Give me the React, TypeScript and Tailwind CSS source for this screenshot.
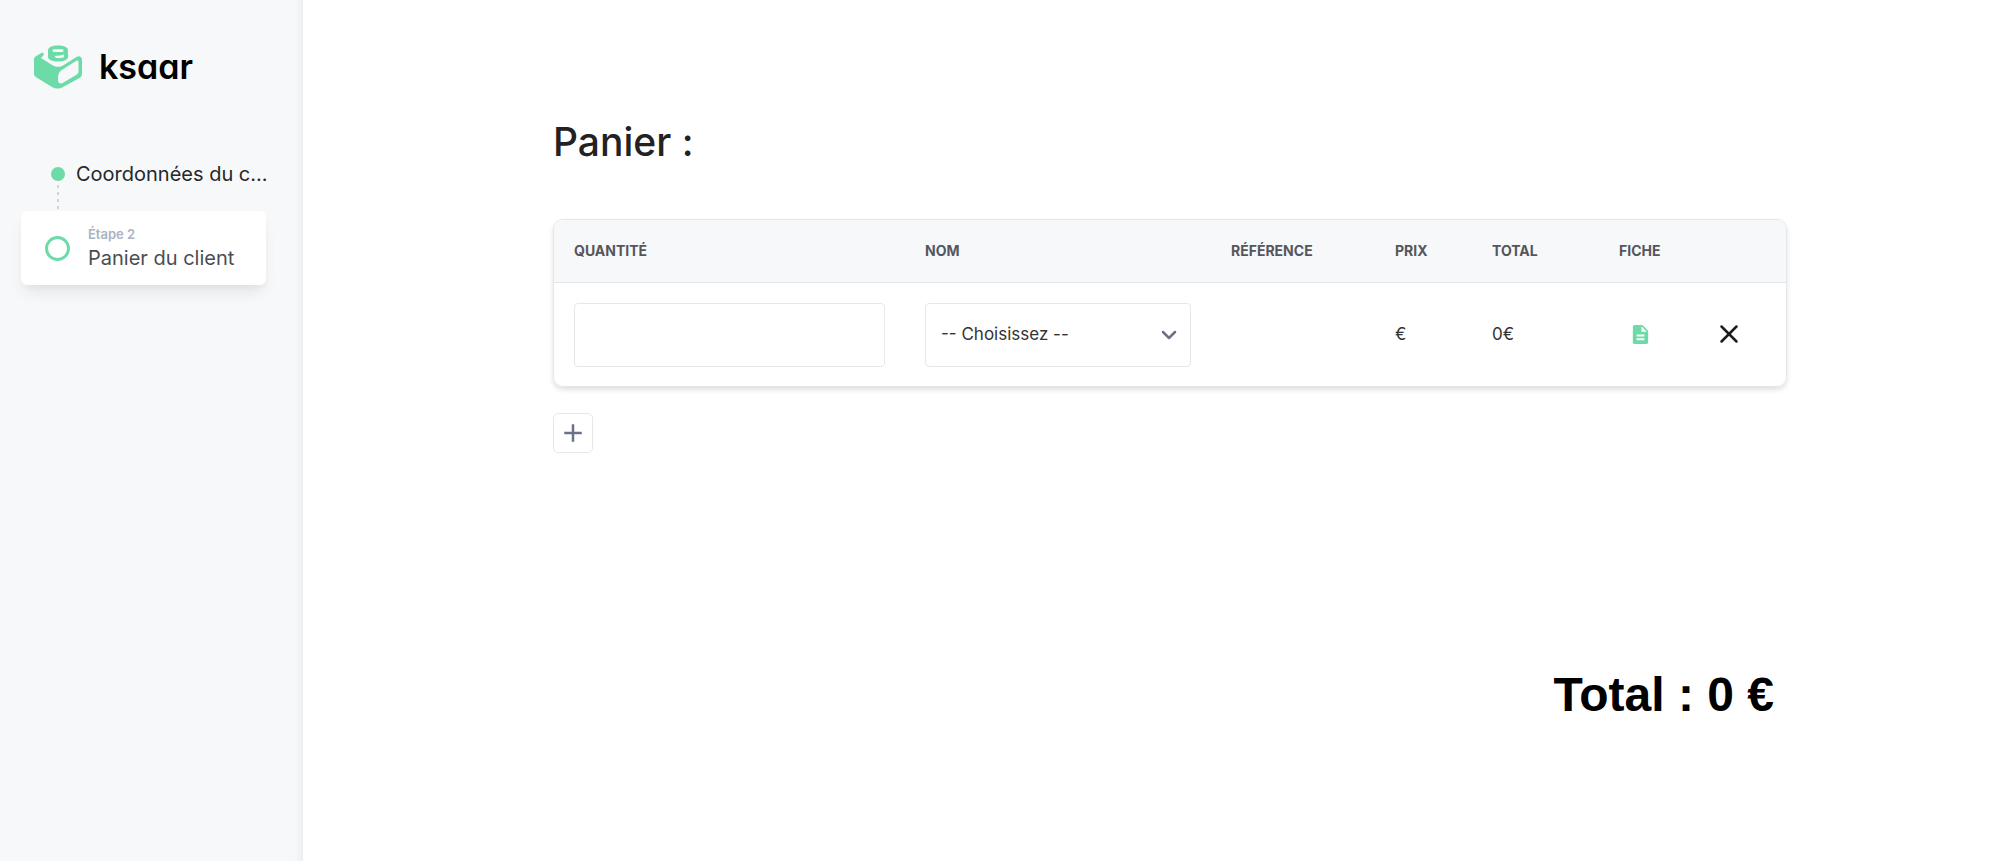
import { useState } from "react";
import { Plus, X, ChevronDown } from "lucide-react";
import { MdDescription } from "react-icons/md";

const PRODUCTS = ["Produit A", "Produit B", "Produit C"];

const COLUMNS = [
  { label: "Quantité", width: "w-[351px]" },
  { label: "Nom", width: "w-[306px]" },
  { label: "Référence", width: "w-[164px]" },
  { label: "Prix", width: "w-[97px]" },
  { label: "Total", width: "w-[127px]" },
  { label: "Fiche", width: "w-[83px]" },
];

function Logo() {
  return (
    <a href="#" className="flex items-center gap-4 px-[33px] text-black">
      <svg width="50" height="44" viewBox="0 0 50 44" fill="none" aria-hidden="true">
        {/* brique */}
        <path
          d="M8 8.200C9.800 7 11.800 9 10.300 10.600L8 13L20 20.400C23 22.200 27 22.200 30 20.400L43.500 12C46 10.500 49 11.800 49 14.800V28.500C49 30.500 48 32 46.500 33L30 42C26.500 44 22.500 44 19 42L3.500 32.500C2 31.500 1 30.500 1 28.500V14.500C1 13 1.600 12 2.800 11.200Z"
          fill="#6ddba8"
        />
        <path
          d="M45.500 17C45.500 15.600 44.600 15.100 43.400 15.800L29.500 24.500C26.500 26.400 25 29 25 32V35C25 38.300 27.500 39.400 30.500 37.600L43.500 29.700C44.800 28.900 45.500 27.800 45.500 26.500Z"
          fill="#f7f8fa"
        />
        {/* plot */}
        <path
          d="M15 5.500C15 2.300 19 0.500 25 0.500C31 0.500 35 2.300 35 5.500V11.500C35 14.700 31 16.500 25 16.500C19 16.500 15 14.700 15 11.500Z"
          fill="#6ddba8"
        />
        <rect x="19.500" y="4.300" width="11" height="2.600" rx="1.300" fill="#f7f8fa" />
        <path d="M23 10.800C26 10.800 28 10.500 31 9.600V11.400C31 12.800 28.500 13.200 23.500 13C21.500 13 21.500 10.800 23 10.800Z" fill="#f7f8fa" />
      </svg>
      <span className="text-[34px] leading-[44px] font-semibold [font-feature-settings:'cv11']">ksaar</span>
    </a>
  );
}

function Steps() {
  return (
    <nav aria-label="Étapes" className="mt-[71px] pr-[37px] pl-[21px]">
      <a href="#coordonnees" className="flex h-7 items-center gap-[11px] pl-[30px] text-[#26272b]">
        <span className="size-[14px] shrink-0 rounded-full bg-[#6ddba8]" />
        <span className="text-[20px] leading-7 whitespace-nowrap">Coordonnées du c...</span>
      </a>
      <svg width="2" height="24" className="mt-[-3px] mb-[2px] ml-9 block" aria-hidden="true">
        <path d="M1 0V24" stroke="#d0d3d7" strokeWidth="2" strokeDasharray="3 4" />
      </svg>
      <a
        href="#panier"
        aria-current="step"
        className="flex h-[74px] items-center gap-[18px] rounded-md bg-white pl-6 shadow-[0_10px_15px_-3px_rgba(0,0,0,0.08),0_4px_6px_-2px_rgba(0,0,0,0.04)]"
      >
        <span className="size-[25px] shrink-0 rounded-full border-[3px] border-[#6ddba8]" />
        <span className="flex flex-col">
          <span className="text-[13px] leading-5 font-semibold text-[#a9b4c2]">Étape 2</span>
          <span className="text-[20px] leading-7 text-[#4b4c52]">Panier du client</span>
        </span>
      </a>
    </nav>
  );
}

function CartRow({ onRemove }: { onRemove: () => void }) {
  const [quantity, setQuantity] = useState("");
  const [product, setProduct] = useState("");

  return (
    <tr className="text-[17px] text-[#333]">
      <td className="px-5 pt-5 pb-[19px]">
        <input
          type="text"
          aria-label="Quantité"
          value={quantity}
          onChange={(e) => setQuantity(e.target.value)}
          className="block h-16 w-full rounded border border-[#e5e7eb] bg-white px-4 outline-none"
        />
      </td>
      <td className="px-5 pt-5 pb-[19px]">
        <div className="relative">
          <select
            aria-label="Nom"
            value={product}
            onChange={(e) => setProduct(e.target.value)}
            className="block h-16 w-full appearance-none rounded border border-[#e5e7eb] bg-white px-[15px] outline-none"
          >
            <option value="">-- Choisissez --</option>
            {PRODUCTS.map((p) => (
              <option key={p} value={p}>
                {p}
              </option>
            ))}
          </select>
          <ChevronDown
            size={24}
            strokeWidth={2.5}
            className="pointer-events-none absolute top-5 right-2.5 text-[#6b7285]"
          />
        </div>
      </td>
      <td className="px-5"></td>
      <td className="px-5 pt-px">€</td>
      <td className="px-5 pt-px">0€</td>
      <td className="px-5">
        <a href="#fiche" aria-label="Fiche produit" className="flex justify-center text-[#6ddba8]">
          <MdDescription size={23} />
        </a>
      </td>
      <td className="pl-8">
        <button type="button" aria-label="Supprimer la ligne" onClick={onRemove} className="block text-[#1c1c1e]">
          <X size={30} />
        </button>
      </td>
    </tr>
  );
}

export default function App() {
  const [rows, setRows] = useState([1]);

  return (
    <div className="flex min-h-screen bg-white pb-[7px] font-['Inter',sans-serif]">
      <aside className="w-[303px] shrink-0 bg-[#f7f8fa] pt-[45px] shadow-[inset_-12px_0_12px_-12px_rgba(0,0,0,0.08)]">
        <Logo />
        <Steps />
      </aside>

      <main className="flex-1 pt-[118px] pr-[215px] pl-[250px]">
        <h1 className="text-[39px] leading-12 font-medium text-[#222]">Panier :</h1>

        <div className="mt-[53px] overflow-hidden rounded-[10px] border border-[#e5e7eb] shadow-[0_3px_5px_rgba(0,0,0,0.12)]">
          <table className="w-full table-fixed border-collapse text-left">
            <thead>
              <tr className="h-[62px] border-b border-[#e5e7eb] bg-[#f7f8fa]">
                {COLUMNS.map((col) => (
                  <th
                    key={col.label}
                    scope="col"
                    className={`${col.width} px-5 text-[14px] font-bold text-[#55565b] uppercase`}
                  >
                    {col.label}
                  </th>
                ))}
                <th aria-label="Actions" className="px-5"></th>
              </tr>
            </thead>
            <tbody>
              {rows.map((id) => (
                <CartRow key={id} onRemove={() => setRows(rows.filter((r) => r !== id))} />
              ))}
            </tbody>
          </table>
        </div>

        <button
          type="button"
          aria-label="Ajouter une ligne"
          onClick={() => setRows([...rows, Date.now()])}
          className="mt-[26px] flex size-10 items-center justify-center rounded-[5px] border border-[#e5e7eb] text-[#6b7285]"
        >
          <Plus size={30} strokeLinecap="butt" />
        </button>

        <p className="mt-[214px] pr-[13px] text-right font-['Liberation_Sans',Arial,sans-serif] text-[48px] leading-14 font-bold text-black">
          Total : 0 €
        </p>
      </main>
    </div>
  );
}
